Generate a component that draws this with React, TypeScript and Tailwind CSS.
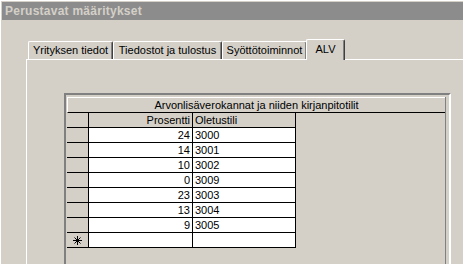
import React from "react";

const rows: [string, string][] = [
  ["24", "3000"],
  ["14", "3001"],
  ["10", "3002"],
  ["0", "3009"],
  ["23", "3003"],
  ["13", "3004"],
  ["9", "3005"],
];

function Tab({ label, w, selected }: { label: string; w: string; selected?: boolean }) {
  if (selected) {
    return (
      <div
        className={`${w} h-[21px] -mb-[1px] -ml-[1px] relative z-10 bg-[#d4d0c8] border-t border-l border-white border-r border-r-[#404040] shadow-[inset_-1px_0_0_#808080] rounded-tl-[2px] rounded-tr-[2px] text-center leading-[17px] pt-[1px]`}
      >
        {label}
      </div>
    );
  }
  return (
    <div
      className={`${w} h-[18px] border-t border-l border-white border-r border-r-[#404040] shadow-[inset_-1px_0_0_#808080] rounded-tl-[2px] rounded-tr-[2px] text-center leading-[16px]`}
    >
      {label}
    </div>
  );
}

function Star() {
  return (
    <svg width="9" height="9" viewBox="0 0 9 9" className="block">
      <g stroke="#000" strokeWidth="1" shapeRendering="crispEdges">
        <line x1="4.5" y1="0" x2="4.5" y2="9" />
        <line x1="0" y1="4.5" x2="9" y2="4.5" />
      </g>
      <g stroke="#000" strokeWidth="1">
        <line x1="1.5" y1="1.5" x2="7.5" y2="7.5" />
        <line x1="7.5" y1="1.5" x2="1.5" y2="7.5" />
      </g>
    </svg>
  );
}

export default function App() {
  return (
    <div className="w-[463px] h-[264px] overflow-hidden bg-[#d4d0c8] font-['Liberation_Sans',Arial,sans-serif] text-[11px] text-black border-l border-t border-white flex flex-col">
      <div className="ml-[1px] mt-[1px] h-[18px] shrink-0 bg-[#8c8c8c] text-[#d4d0c8] font-bold text-[12px] leading-[18px] pl-[3px] tracking-[0.25px]">
        Perustavat määritykset
      </div>

      <div className="ml-[27px] mt-[19px] h-[20px] shrink-0 flex items-end">
        <Tab label="Yrityksen tiedot" w="w-[85px]" />
        <Tab label="Tiedostot ja tulostus" w="w-[109px]" />
        <Tab label="Syöttötoiminnot" w="w-[85px]" />
        <Tab label="ALV" w="w-[39px]" selected />
      </div>

      <div className="ml-[25px] w-[440px] flex-1 flex flex-col border-t border-l border-white">
        <div className="ml-[37px] mt-[33px] w-[387px] flex-1 flex flex-col border-t-2 border-l-2 border-r-2 border-t-[#808080] border-l-[#808080] border-r-white pt-[2px] pl-[1px]">
          <div className="w-[379px] flex-1 flex flex-col border-r border-r-[#808080]">
            <div className="h-[16px] border-t border-l border-white border-b border-b-black text-center leading-[14px]">
              Arvonlisäverokannat ja niiden kirjanpitotilit
            </div>
            <div className="flex h-[15px]">
              <div className="w-[22px] border-r border-b border-black" />
              <div className="w-[104px] border-r border-b border-black text-right pr-[2px] leading-[14px]">
                Prosentti
              </div>
              <div className="w-[103px] border-r border-b border-black pl-[2px] leading-[14px]">
                Oletustili
              </div>
            </div>
            {rows.map(([p, a]) => (
              <div key={a} className="flex h-[15px]">
                <div className="w-[22px] border-r border-b border-black" />
                <div className="w-[104px] bg-white border-r border-b border-black text-right pr-[2px] leading-[14px]">
                  {p}
                </div>
                <div className="w-[103px] bg-white border-r border-b border-black pl-[2px] leading-[14px]">
                  {a}
                </div>
              </div>
            ))}
            <div className="flex h-[15px]">
              <div className="w-[22px] border-r border-b border-black flex items-center justify-center">
                <Star />
              </div>
              <div className="w-[104px] bg-white border-r border-b border-black" />
              <div className="w-[103px] bg-white border-r border-b border-black" />
            </div>
          </div>
        </div>
      </div>
    </div>
  );
}
